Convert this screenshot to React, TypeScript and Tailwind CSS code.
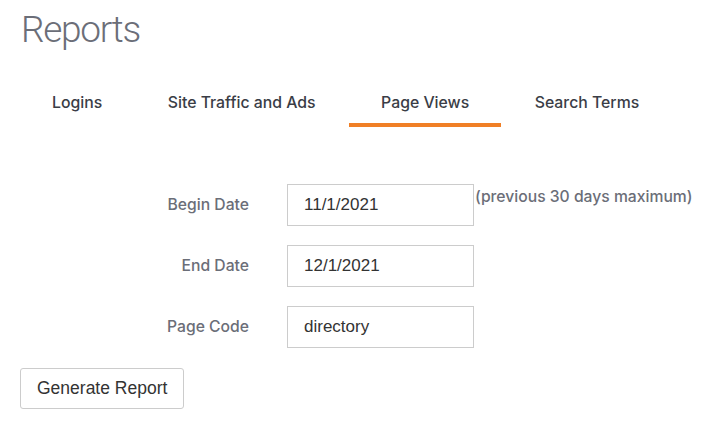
export default function App() {
  const tabs = ["Logins", "Site Traffic and Ads", "Page Views", "Search Terms"]
  const active = "Page Views"

  const fields = [
    { label: "Begin Date", value: "11/1/2021", note: "(previous 30 days maximum)" },
    { label: "End Date", value: "12/1/2021" },
    { label: "Page Code", value: "directory" },
  ]

  return (
    <div className="w-[712px] h-[422px] bg-white px-5 pt-[8px] font-['Inter',sans-serif]">
      <h1 className="text-[37px] leading-[44px] font-light text-[#6b6e78] pl-[1px] tracking-[-1.3px] font-['Roboto',sans-serif]">
        Reports
      </h1>

      {/* tabs */}
      <div className="flex gap-[1.5px] mt-[41px]">
        {tabs.map((t) => (
          <div
            key={t}
            className={`px-8 pb-[10px] border-b-4 text-[15.8px] leading-[20px] font-medium text-[#3a3d46] ${
              t === active ? "border-[#f07f26]" : "border-transparent"
            }`}
          >
            {t}
          </div>
        ))}
      </div>

      {/* form */}
      <div className="mt-[57px] flex flex-col gap-[19px]">
        {fields.map((f) => (
          <div key={f.label} className="flex items-start">
            <label className="w-[229px] shrink-0 h-[42px] flex items-center justify-end text-[15.7px] font-medium text-[#6b6e78]">
              {f.label}
            </label>
            <input
              readOnly
              value={f.value}
              className="ml-[38px] w-[187px] shrink-0 h-[42px] border border-[#cccccc] px-4 text-[17px] text-[#333] font-['Liberation_Sans',sans-serif] outline-none"
            />
            {f.note && (
              <span className="ml-[1px] mt-[3px] whitespace-nowrap text-[15.7px] leading-[20px] font-medium text-[#6b6e78]">
                {f.note}
              </span>
            )}
          </div>
        ))}
      </div>

      <button className="mt-[20px] h-[41px] px-4 border border-[#cccccc] rounded-[3px] bg-white text-[17.5px] text-[#333] font-['Liberation_Sans',sans-serif]">
        Generate Report
      </button>
    </div>
  )
}
